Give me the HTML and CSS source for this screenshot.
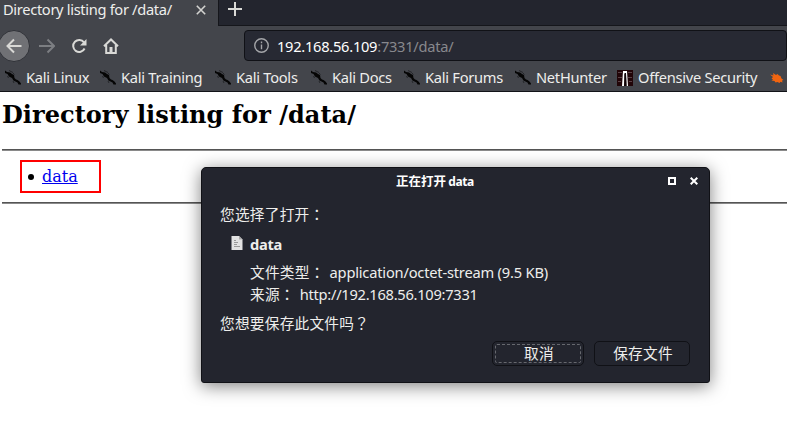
FILE: index.html
```html
<!DOCTYPE html>
<html lang="zh-CN">
<head>
<meta charset="utf-8">
<title>Directory listing for /data/</title>
<link rel="stylesheet" href="styles.css">
</head>
<body>
<svg class="defs" aria-hidden="true">
  <symbol id="kali" viewBox="0 0 16 16">
    <path fill="#050505" d="M0 .5L2 2l3 .5 2 1.500 2 1 .500 3 1.500 1.500 1.500.500 2 1.500 1.500 2 0 1-2.500 0-1-2-2-1-2-1-1.500-2.500-3-1.500-1.500-2.500L0 3z"/>
    <path fill="none" stroke="#17181b" stroke-width=".7" d="M4 .5l4 2M8 3l1.500 1.500M2 6.500l2 1M8 11l1 2"/>
  </symbol>
</svg>
<header class="browser">
  <div class="tabbar">
    <div class="tab"><span class="tabtitle">Directory listing for /data/</span>
      <svg class="tabclose" viewBox="0 0 10 10"><path d="M.8.8l8.400 8.400M9.200.8L.8 9.200"/></svg>
    </div>
    <svg class="plus" viewBox="0 0 14 14"><path d="M7 0v14M0 7h14"/></svg>
  </div>
  <div class="toolbar">
    <div class="back"><svg viewBox="0 0 16 16"><path d="M15.500 8H1.500M8 1.500L1.500 8 8 14.500"/></svg></div>
    <svg class="forward" viewBox="0 0 16 16"><path d="M0 8h15M8.500 1.500L15 8l-6.500 6.500"/></svg>
    <svg class="reload" viewBox="0 0 16 16"><path d="M13 4.300A6 6 0 1 0 13.600 10.500"/><path class="solid" d="M15.500 1v6.500H9z"/></svg>
    <svg class="home" viewBox="0 0 16 16"><path d="M1 8.200L8 1.500l7 6.700M3.200 7v8h9.600V7"/><path class="solid" d="M6.500 9h3v6h-3z"/></svg>
    <div class="url">
      <svg class="info" viewBox="0 0 14 14"><circle cx="7" cy="7" r="6.300"/><path d="M7 6v4.500M7 3.300v1.700"/></svg>
      <span class="host">192.168.56.109</span><span class="path">:7331/data/</span>
    </div>
  </div>
  <nav class="bookmarks">
    <div class="bm w1"><svg><use href="#kali"/></svg><span>Kali Linux</span></div>
    <div class="bm w2"><svg><use href="#kali"/></svg><span>Kali Training</span></div>
    <div class="bm w3"><svg><use href="#kali"/></svg><span>Kali Tools</span></div>
    <div class="bm w4"><svg><use href="#kali"/></svg><span>Kali Docs</span></div>
    <div class="bm w5"><svg><use href="#kali"/></svg><span>Kali Forums</span></div>
    <div class="bm w6"><svg><use href="#kali"/></svg><span>NetHunter</span></div>
    <div class="bm w7"><svg viewBox="0 0 16 16"><path fill="#210508" d="M0 0h16v16H0z"/><path stroke="#5a4045" d="M1 2.500h4M1 7.500h4M1 11.500h3M11 2.500h4M11 7.500h4M12 11.500h3"/><path fill="#fff" d="M6 1h4l1 15H9.500L9 4H7.500L7 16H5z"/><path fill="#100609" d="M7.500 3H9l.5 13h-2z"/></svg><span>Offensive Security</span></div>
    <div class="bm"><svg viewBox="0 0 16 16"><path fill="#f26510" d="M1 4.500l3.500 1L4 3l3 2 1.500-1 1.500 1.500 1.500.5 1 2.500 2 1.500-1.500.500.500 2-2-.700-1 1.200-2-1-2 .500-1-1.500-3-.500 1.500-1L2.500 8.500 4 7z"/></svg></div>
  </nav>
</header>
<main>
  <h1><span>Directory listing for /data/</span></h1>
  <section class="listing"><ul><li><a href="#">data</a></li></ul></section>
</main>
<div class="dialog" role="dialog">
  <div class="titlebar"><span class="title">正在打开 <span class="name">data</span></span>
    <span class="max"></span>
    <svg class="close" viewBox="0 0 8 8"><path d="M.7.7l6.600 6.600M7.300.7L.7 7.300"/></svg>
  </div>
  <div class="line intro">您选择了打开<span class="punct" lang="zh-TW">：</span></div>
  <div class="file"><svg viewBox="0 0 12 14"><path fill="#e2e2e2" d="M.5 0H8l3.500 3.500V14H.5z"/><path fill="#aaa" d="M8 0l3.500 3.500H8z"/><path stroke="#999" d="M3 4.500h2M3 6.500h4M3 8.500h3M3 10.500h6"/></svg><b>data</b></div>
  <div class="line detail"><span class="label">文件类型<span class="punct" lang="zh-TW">：</span></span><span class="mime">application/octet-stream (9.5 KB)</span></div>
  <div class="line detail source"><span class="label">来源<span class="punct" lang="zh-TW">：</span></span><span class="addr">http://192.168.56.109:7331</span></div>
  <div class="line ask">您想要保存此文件吗<span class="punct" lang="zh-TW">？</span></div>
  <div class="actions"><button class="cancel"><span>取消</span></button><button class="save"><span>保存文件</span></button></div>
</div>
</body>
</html>
```
FILE: styles.css
```css
* { box-sizing: border-box; }
body { margin: 0; width: 787px; height: 422px; overflow: hidden; background: #fff; font-family: "Noto Sans", "Noto Sans CJK SC", sans-serif; font-size: 14.67px; letter-spacing: -.27px; color: #eeeeec; }
svg { display: block; flex: none; fill: none; }
.defs { position: absolute; width: 0; height: 0; }
.browser { height: 92px; background: #43454b; border-bottom: 1px solid #111217; white-space: nowrap; }
.tabbar { display: flex; height: 26px; background: #23252e; border-bottom: 1px solid #15161b; }
.tab { display: flex; width: 219px; height: 26px; background: #43454b; border-right: 1px solid #15161b; padding-left: 3px; }
.tabtitle { width: 193px; line-height: 18px; letter-spacing: -.33px; }
.tabclose { width: 10px; height: 10px; margin-top: 5px; stroke: #d3d3d0; stroke-width: 1.6; }
.plus { width: 14px; height: 14px; margin: 2px 0 0 9px; stroke: #d9d9d6; stroke-width: 2; }
.toolbar { display: flex; height: 39px; padding-top: 3px; }
.back { width: 32px; height: 32px; margin: 1px 0 0 -2px; border-radius: 50%; background: #707175; border: 1px solid #303238; padding: 7px 7px; }
.toolbar svg { width: 16px; height: 16px; stroke: #d9d9d6; stroke-width: 2; margin-top: 9px; }
.toolbar .back svg { margin: 0; }
.toolbar .forward { margin-left: 9px; stroke: #7c7e82; }
.toolbar .reload { margin-left: 16px; }
.toolbar .home { margin-left: 16px; }
.toolbar .solid { fill: #d9d9d6; stroke: none; }
.url { display: flex; align-items: center; width: 560px; height: 31px; margin: 1px 0 0 125px; background: #272933; border: 1px solid #101116; border-radius: 4px; padding-left: 9px; }
.toolbar .info { width: 15px; height: 15px; margin: 0 8px 0 0; stroke: #a4a5a9; stroke-width: 1.3; }
.host { color: #fff; }
.path { color: #87888d; }
.bookmarks { display: flex; padding-left: 5px; height: 25px; }
.bm { display: flex; align-items: center; gap: 5px; width: 30px; flex: none; }
.bm svg { width: 16px; height: 16px; }
.bm span { margin-bottom: 2px; }
.w1 { width: 95px; }
.w2 { width: 115px; }
.w3 { width: 96px; }
.w4 { width: 93px; }
.w5 { width: 111px; }
.w6 { width: 102px; }
.w7 { width: 152px; }
main { padding: 7px 0 0 2px; color: #000; font-family: "DejaVu Serif", serif; letter-spacing: 0; }
h1 { margin: 0; font-size: 24px; line-height: 31px; height: 50px; letter-spacing: .04px; }
.listing { height: 54px; border: solid #555; border-width: 1px 0; padding: 10px 0 0 18px; box-shadow: inset 0 1px #8a8a8a, 0 1px #8a8a8a; }
ul { margin: 0; padding: 0 0 0 6px; width: 81px; height: 33px; border: 2px solid #f00; font-size: 16px; line-height: 29px; list-style: none; }
li { display: flex; align-items: center; gap: 8px; }
li::before { content: ""; width: 6px; height: 6px; border-radius: 50%; background: #000; margin-top: 1px; }
li a { color: #00e; }
.dialog { position: absolute; left: 201px; top: 167px; width: 509px; height: 216px; background: #23252e; border: 1px solid #101116; border-radius: 5px 5px 3px 3px; box-shadow: 0 3px 17px rgba(0,0,0,.5); padding: 0 18px; white-space: nowrap; }
.titlebar { display: flex; height: 27px; }
.title { font-size: 12.5px; font-weight: 700; line-height: 27px; margin-left: 176px; width: 272px; flex: none; color: #fff; letter-spacing: 0; }
.name { font-size: 12px; letter-spacing: -.4px; margin-left: -1px; }
.max { width: 8px; height: 8px; flex: none; border: 2px solid #fff; margin-top: 9px; }
.close { width: 8px; height: 8px; stroke: #fff; stroke-width: 2; margin: 9px 0 0 14px; }
.line { height: 22px; line-height: 22px; }
.intro { margin-top: 8px; }
.intro, .label, .ask, .actions { letter-spacing: .25px; }
.punct { font-family: "Noto Sans CJK TC", sans-serif; }
.file { display: flex; height: 22px; margin: 8px 0 0 11px; line-height: 23px; }
.file svg { width: 12px; height: 14px; margin: 3px 7px 0 0; }
.detail { display: flex; margin: 6px 0 0 30px; }
.source { margin-top: 0; }
.label { margin-right: 5px; }
.mime { letter-spacing: -.2px; }
.ask { margin-top: 7px; }
.actions { display: flex; justify-content: flex-end; gap: 10px; margin: 7px 1px 0 0; }
button { height: 25px; padding: 0 0 2px 2px; background: #23252e; border: 1px solid #101116; border-radius: 5px; color: #eeeeec; font: inherit; letter-spacing: inherit; line-height: 20px; }
.cancel { width: 92px; padding: 2px; }
.cancel span { display: block; height: 19px; line-height: 16px; padding-left: 2px; border: 1px dashed #66686e; border-radius: 2px; }
.save { width: 96px; }
```
